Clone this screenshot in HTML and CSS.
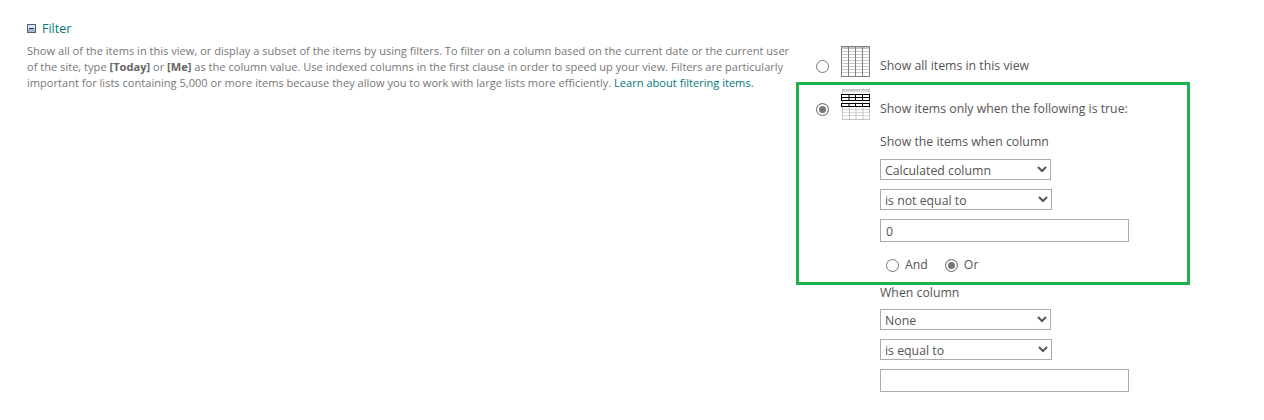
FILE: index.html
```html
<!DOCTYPE html>
<html lang="en">

<head>
    <meta charset="UTF-8">
    <title>Filter</title>
    <link rel="stylesheet" href="styles.css">
</head>

<body>
    <div class="section">
        <div class="left">
            <h3 class="head">
                <svg class="toggle" width="9" height="9" viewBox="0 0 9 9">
                    <rect x="0.5" y="0.5" width="8" height="8" fill="#dfe6ee" stroke="#4d6082" />
                    <rect x="1" y="5" width="7" height="3" fill="#aab8cc" />
                    <rect x="2" y="4" width="5" height="1" fill="#1f3a66" />
                </svg>
                <a href="#">Filter</a>
            </h3>
            <p class="desc">Show all of the items in this view, or display a subset of the items by using filters. To filter on a column based on the current date or the current user of the site, type <b>[Today]</b> or <b>[Me]</b> as the column value. Use indexed columns in the first clause in order to speed up your view. Filters are particularly important for lists containing 5,000 or more items because they allow you to work with large lists more efficiently. <a href="#">Learn about filtering items.</a></p>
        </div>

        <div class="right">
            <div class="opt opt-all">
                <input type="radio" name="mode" class="radio">
                <svg class="grid" width="30" height="31" viewBox="0 0 30 31">
                    <rect x="0.5" y="0.5" width="28" height="30" fill="#fff" stroke="#808080" />
                    <rect x="1" y="1" width="27" height="2" fill="#c4c4c4" />
                    <path d="M1 5.5H28M1 8.5H28M1 11.5H28M1 14.5H28M1 17.5H28M1 20.5H28M1 23.5H28M1 26.5H28" stroke="#c8c8c8" />
                    <path d="M7.5 1V30M14.5 1V30M21.5 1V30" stroke="#808080" />
                </svg>
                <span>Show all items in this view</span>
            </div>
            <div class="opt opt-some">
                <input type="radio" name="mode" class="radio" checked>
                <svg class="grid" width="30" height="31" viewBox="0 0 30 31">
                    <rect x="1.5" y="0.5" width="27" height="30" fill="#fff" stroke="#c4c4c4" />
                    <rect x="2" y="1" width="26" height="2" fill="#d8d8d8" />
                    <path d="M2 20.5H28M2 23.5H28M2 26.5H28" stroke="#d8d8d8" />
                    <path d="M8.5 18V30M15 18V30M22 18V30" stroke="#c4c4c4" />
                    <rect x="0.5" y="5.5" width="28" height="6" fill="#fff" stroke="#000" />
                    <path d="M0 8.5H29M8 5V12M14.5 5V12M21.5 5V12" stroke="#000" />
                    <rect x="0.5" y="14.5" width="28" height="3" fill="#fff" stroke="#000" />
                    <path d="M8 14V18M14.5 14V18M21.5 14V18" stroke="#000" />
                </svg>
                <span>Show items only when the following is true:</span>
            </div>

            <div class="fields">
                <div class="label">Show the items when column</div>
                <select class="pick pick-col"><option>Calculated column</option></select>
                <select class="pick pick-op"><option>is not equal to</option></select>
                <input type="text" class="val" value="0">
                <div class="andor">
                    <label><input type="radio" name="join" class="radio">And</label>
                    <label><input type="radio" name="join" class="radio" checked>Or</label>
                </div>
                <div class="label label-when">When column</div>
                <select class="pick pick-col pick-first"><option>None</option></select>
                <select class="pick pick-op"><option>is equal to</option></select>
                <input type="text" class="val">
            </div>

            <div class="highlight"></div>
        </div>
    </div>
</body>

</html>
```

FILE: styles.css
```css
* {
    margin: 0;
    padding: 0;
    box-sizing: border-box;
}

body {
    font-family: "Open Sans", "Noto Sans", sans-serif;
    color: #555;
    background: #fff;
    height: 420px;
    overflow: hidden;
}

a {
    color: #03787c;
    text-decoration: none;
}

.section {
    display: flex;
    align-items: flex-start;
    padding-top: 19px;
}

.left {
    width: 816px;
    padding-left: 27px;
    padding-right: 22px;
    flex-shrink: 0;
}

.head {
    display: flex;
    align-items: center;
    gap: 6px;
    height: 18px;
    font-size: 12.5px;
    font-weight: 400;
}

.desc {
    margin-top: 6px;
    font-size: 11.08px;
    line-height: 16px;
    color: #777;
}

.desc b {
    color: #666;
}

.right {
    position: relative;
    width: 400px;
    font-size: 12.3px;
}

.opt {
    display: flex;
    align-items: center;
}

.opt-all {
    margin-top: 27px;
}

.opt-some {
    margin-top: 4px;
}

.radio {
    appearance: none;
    width: 13px;
    height: 13px;
    border: 1px solid #777;
    border-radius: 50%;
    background: #fff;
    flex-shrink: 0;
}

.radio:checked {
    background: #777;
    box-shadow: inset 0 0 0 2px #fff;
}

.opt .radio {
    margin-right: 12px;
    margin-top: 1px;
}

.opt .grid {
    margin-right: 9px;
    margin-bottom: 8px;
    flex-shrink: 0;
}

.fields {
    padding-left: 64px;
    display: flex;
    flex-direction: column;
    align-items: flex-start;
}

.label {
    margin-top: 4px;
    height: 18px;
    line-height: 20px;
}

.label-when {
    margin-top: 10px;
}

.pick {
    display: block;
    height: 21px;
    margin-top: 9px;
    border: 1px solid #ababab;
    border-radius: 0;
    background: #fff;
    font-family: inherit;
    font-size: 12.3px;
    color: #555;
    padding: 1px 0 0;
}

.pick-first {
    margin-top: 8px;
}

.pick-col {
    width: 171px;
}

.pick-op {
    width: 172px;
}

.val {
    display: block;
    width: 249px;
    height: 23px;
    margin-top: 9px;
    border: 1px solid #ababab;
    font-family: inherit;
    font-size: 12.3px;
    color: #555;
    padding: 2px 5px 0;
}

.andor {
    display: flex;
    gap: 17px;
    margin-top: 13px;
    padding-left: 6px;
    height: 18px;
}

.andor label {
    display: flex;
    align-items: center;
    gap: 6px;
}

.andor .radio {
    margin-top: 2px;
}

.highlight {
    position: absolute;
    left: -20px;
    top: 63px;
    width: 394px;
    height: 203px;
    border: 3px solid #1fb14f;
    pointer-events: none;
}
```
